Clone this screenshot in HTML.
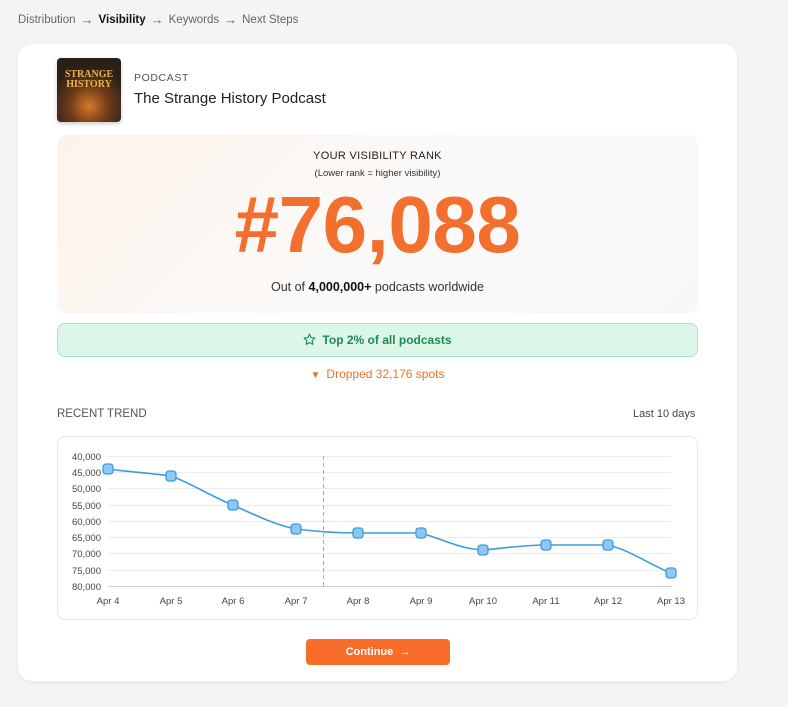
<!DOCTYPE html>
<html><head><meta charset="utf-8"><style>
*{margin:0;padding:0;box-sizing:border-box}
body{width:788px;height:707px;background:#f3f4f6;font-family:"Liberation Sans",sans-serif;position:relative;overflow:hidden;color:#222}
.crumb{position:absolute;left:18px;top:12px;font-size:11.5px;color:#666;white-space:nowrap}
.crumb b{color:#111}
.crumb i{font-style:normal;font-size:13px;margin:0 5px;vertical-align:-1px}
.card{position:absolute;left:18px;top:44px;width:719px;height:637px;background:#fff;border-radius:14px;box-shadow:0 1px 4px rgba(0,0,0,.06)}
.abs{position:absolute}
</style></head><body>
<div class="crumb">Distribution<i>→</i><b>Visibility</b><i>→</i>Keywords<i>→</i>Next Steps</div>
<div class="card"></div>
<div class="abs" style="left:57px;top:58px;width:64px;height:64px;border-radius:4px;background:radial-gradient(circle at 50% 75%,#d9782a 0,#6b3a1a 35%,#2a2018 70%);box-shadow:0 2px 4px rgba(0,0,0,.2)">
<div style="position:absolute;top:12px;width:100%;text-align:center;color:#e8b44a;font-weight:bold;font-size:10px;line-height:10px;font-family:'Liberation Serif',serif">STRANGE<br>HISTORY</div></div>
<div class="abs" style="left:134px;top:72px;font-size:10.5px;color:#555;letter-spacing:.6px">PODCAST</div>
<div class="abs" style="left:134px;top:90px;font-size:15px;color:#222">The Strange History Podcast</div>
<div class="abs" style="left:57px;top:135px;width:641px;height:178px;border-radius:10px;background:linear-gradient(135deg,#fdf3ec,#fafafa 60%,#f7f7f7)"></div>
<div class="abs" style="left:57px;top:150px;width:641px;text-align:center;font-size:11px;color:#222;letter-spacing:.3px">YOUR VISIBILITY RANK</div>
<div class="abs" style="left:57px;top:168px;width:641px;text-align:center;font-size:9.5px;color:#333">(Lower rank = higher visibility)</div>
<div class="abs" style="left:57px;top:180px;width:641px;text-align:center;font-size:80px;font-weight:bold;color:#f26f2d;letter-spacing:-0.5px;line-height:90px">#76,088</div>
<div class="abs" style="left:57px;top:280px;width:641px;text-align:center;font-size:12.5px;color:#333">Out of <b style="color:#111">4,000,000+</b> podcasts worldwide</div>
<div class="abs" style="left:57px;top:323px;width:641px;height:34px;border-radius:8px;background:#dcf6e8;border:1px solid #a6e5c6;text-align:center;line-height:32px;font-size:12px;font-weight:bold;color:#1f8a55">
<svg width="13" height="13" viewBox="0 0 24 24" style="vertical-align:-2px;margin-right:6px"><path d="M12 2l3 6.5 7 .8-5.2 4.8 1.5 7L12 17.5 5.7 21l1.5-7L2 9.3l7-.8z" fill="none" stroke="#1b8a50" stroke-width="2" stroke-linejoin="round"/></svg>Top 2% of all podcasts</div>
<div class="abs" style="left:57px;top:367px;width:641px;text-align:center;font-size:12px;color:#e0762d"><span style="font-size:10px;margin-right:6px">▼</span>Dropped 32,176 spots</div>
<div class="abs" style="left:57px;top:408px;font-size:11.5px;color:#555">RECENT TREND</div>
<div class="abs" style="left:633px;top:408px;font-size:11px;color:#444">Last 10 days</div>
<div class="abs" style="left:57px;top:436px;width:641px;height:184px;border:1px solid #e8e8e8;border-radius:8px"></div>
<svg class="abs" style="left:0;top:0" width="788" height="707">
<g stroke="#ececec" stroke-width="1">
<line x1="108" x2="671" y1="456.5" y2="456.5"/><line x1="108" x2="671" y1="472.5" y2="472.5"/><line x1="108" x2="671" y1="488.5" y2="488.5"/><line x1="108" x2="671" y1="505.5" y2="505.5"/><line x1="108" x2="671" y1="521.5" y2="521.5"/><line x1="108" x2="671" y1="537.5" y2="537.5"/><line x1="108" x2="671" y1="553.5" y2="553.5"/><line x1="108" x2="671" y1="570.5" y2="570.5"/>
</g>
<line x1="108" x2="671" y1="586.5" y2="586.5" stroke="#ccc"/>
<line x1="323.5" x2="323.5" y1="456" y2="586" stroke="#aaa" stroke-dasharray="4,3"/>
<g font-family="Liberation Sans" font-size="9.5" fill="#444" text-anchor="end">
<text x="101" y="460">40,000</text><text x="101" y="476">45,000</text><text x="101" y="492">50,000</text><text x="101" y="509">55,000</text><text x="101" y="525">60,000</text><text x="101" y="541">65,000</text><text x="101" y="557">70,000</text><text x="101" y="574">75,000</text><text x="101" y="590">80,000</text>
</g>
<g font-family="Liberation Sans" font-size="9.5" fill="#444" text-anchor="middle">
<text x="108" y="604">Apr 4</text><text x="171" y="604">Apr 5</text><text x="233" y="604">Apr 6</text><text x="296" y="604">Apr 7</text><text x="358" y="604">Apr 8</text><text x="421" y="604">Apr 9</text><text x="483" y="604">Apr 10</text><text x="546" y="604">Apr 11</text><text x="608" y="604">Apr 12</text><text x="671" y="604">Apr 13</text>
</g>
<path d="M108 469 C130 472,150 473,171 476 C195 485,210 496,233 505 C255 515,275 525,296 529 C320 532,340 533,358 533 L421 533 C445 540,460 549,483 550 C505 548,525 545,546 545 L608 545 C630 550,650 565,671 573" fill="none" stroke="#3b9ddd" stroke-width="1.6"/>
<g fill="#8ec8f2" stroke="#3b9ddd" stroke-width="1.3">
<rect x="103" y="464" width="10" height="10" rx="3"/><rect x="166" y="471" width="10" height="10" rx="3"/><rect x="228" y="500" width="10" height="10" rx="3"/><rect x="291" y="524" width="10" height="10" rx="3"/><rect x="353" y="528" width="10" height="10" rx="3"/><rect x="416" y="528" width="10" height="10" rx="3"/><rect x="478" y="545" width="10" height="10" rx="3"/><rect x="541" y="540" width="10" height="10" rx="3"/><rect x="603" y="540" width="10" height="10" rx="3"/><rect x="666" y="568" width="10" height="10" rx="3"/>
</g>
</svg>
<div class="abs" style="left:306px;top:639px;width:144px;height:26px;border-radius:4px;background:#f96d2a;color:#fff;font-size:11px;font-weight:bold;text-align:center;line-height:26px">Continue &nbsp;→</div>
</body></html>
